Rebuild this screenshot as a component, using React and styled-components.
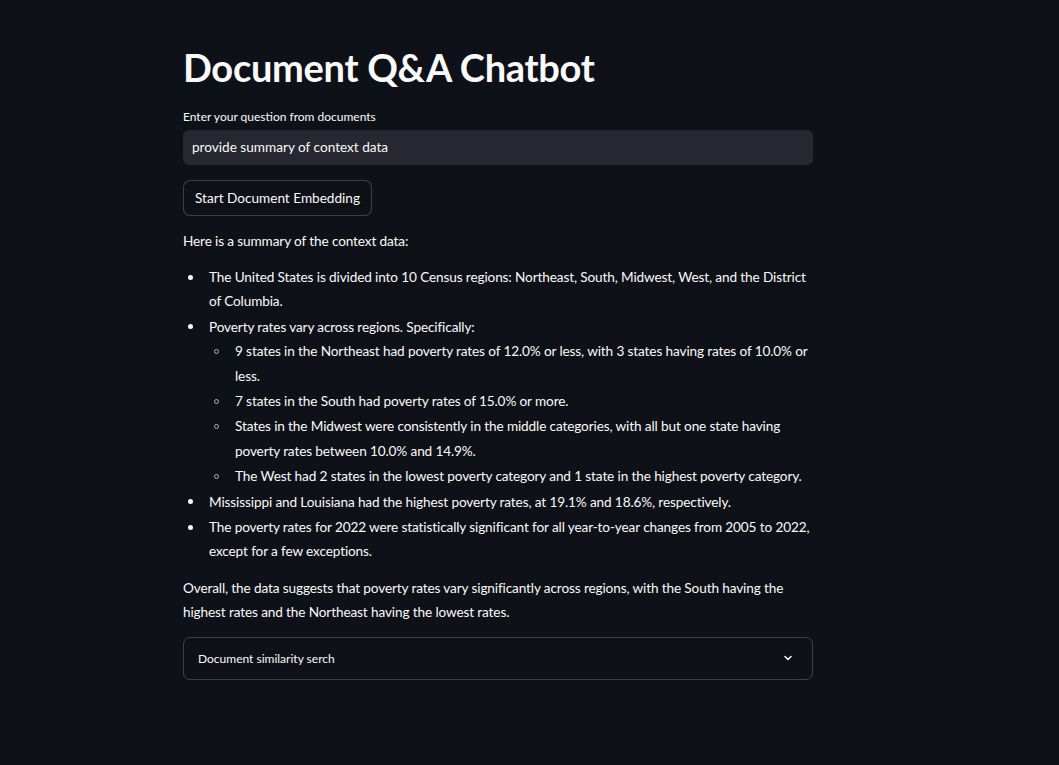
import React from 'react';
import styled, { createGlobalStyle } from 'styled-components';

const GlobalStyle = createGlobalStyle`
  html, body {
    margin: 0;
    padding: 0;
    background: #0e1117;
  }
  body {
    font-family: Lato, "Noto Sans", sans-serif;
    color: #fafafa;
  }
`;

const Page = styled.div`
  min-height: 765px;
  background: #0e1117;
  padding-left: 183px;
`;

const Main = styled.main`
  width: 630px;
  padding-top: 45px;
`;

const Title = styled.h1`
  font-size: 38px;
  font-weight: 700;
  line-height: 1.2;
  margin: 0 0 18px;
  letter-spacing: -0.3px;
`;

const Label = styled.label`
  display: block;
  font-size: 12px;
  margin-bottom: 6px;
`;

const Input = styled.input`
  display: block;
  box-sizing: border-box;
  width: 100%;
  height: 35px;
  border: none;
  outline: none;
  border-radius: 6px;
  background: #262730;
  color: #fafafa;
  font-family: inherit;
  font-size: 13.6px;
  padding: 0 9px;
`;

const Button = styled.button`
  display: inline-flex;
  align-items: center;
  margin-top: 15px;
  height: 36px;
  padding: 0 11px;
  background: #0e1117;
  color: #fafafa;
  font-family: inherit;
  font-size: 13.6px;
  border: 1px solid rgba(250, 250, 250, 0.2);
  border-radius: 7px;
`;

const Body = styled.div`
  margin-top: 13px;
  font-size: 13.6px;
  line-height: 24.4px;
  letter-spacing: -0.12px;
`;

const Para = styled.p`
  margin: 0 0 ${p => p.$gap ?? 12}px;
`;

const List = styled.ul`
  margin: 0 0 ${p => (p.$nested ? 0 : 12)}px;
  padding-left: 26px;
  list-style: none;
`;

const Item = styled.li`
  position: relative;
  margin: 0 0 1px;
  &::before {
    content: '';
    position: absolute;
    left: -21px;
    top: 9.5px;
    box-sizing: border-box;
    width: 5px;
    height: 5px;
    border-radius: 50%;
    background: ${p => (p.$nested ? 'transparent' : '#fafafa')};
    border: ${p => (p.$nested ? '1px solid #b0b0b4' : 'none')};
  }
`;

const Expander = styled.div`
  margin-top: 12px;
  box-sizing: border-box;
  height: 43px;
  border: 1px solid rgba(250, 250, 250, 0.2);
  border-radius: 7px;
  display: flex;
  align-items: center;
  justify-content: space-between;
  padding: 0 18px 0 14px;
  font-size: 12px;
`;

const Chevron = () => (
  <svg width="12" height="12" viewBox="0 0 24 24" fill="none" stroke="#fafafa" strokeWidth="3" strokeLinecap="round" strokeLinejoin="round">
    <path d="M6 9l6 6 6-6" />
  </svg>
);

export default function App() {
  return (
    <Page>
      <GlobalStyle />
      <Main>
        <Title>Document Q&amp;A Chatbot</Title>
        <Label>Enter your question from documents</Label>
        <Input defaultValue="provide summary of context data" />
        <Button>Start Document Embedding</Button>
        <Body>
          <Para>Here is a summary of the context data:</Para>
          <List>
            <Item>The United States is divided into 10 Census regions: Northeast, South, Midwest, West, and the District of Columbia.</Item>
            <Item>
              Poverty rates vary across regions. Specifically:
              <List $nested>
                <Item $nested>9 states in the Northeast had poverty rates of 12.0% or less, with 3 states having rates of 10.0% or less.</Item>
                <Item $nested>7 states in the South had poverty rates of 15.0% or more.</Item>
                <Item $nested>States in the Midwest were consistently in the middle categories, with all but one state having poverty rates between 10.0% and 14.9%.</Item>
                <Item $nested>The West had 2 states in the lowest poverty category and 1 state in the highest poverty category.</Item>
              </List>
            </Item>
            <Item>Mississippi and Louisiana had the highest poverty rates, at 19.1% and 18.6%, respectively.</Item>
            <Item>The poverty rates for 2022 were statistically significant for all year-to-year changes from 2005 to 2022, except for a few exceptions.</Item>
          </List>
          <Para $gap={0}>Overall, the data suggests that poverty rates vary significantly across regions, with the South having the highest rates and the Northeast having the lowest rates.</Para>
        </Body>
        <Expander>
          <span>Document similarity serch</span>
          <Chevron />
        </Expander>
      </Main>
    </Page>
  );
}
